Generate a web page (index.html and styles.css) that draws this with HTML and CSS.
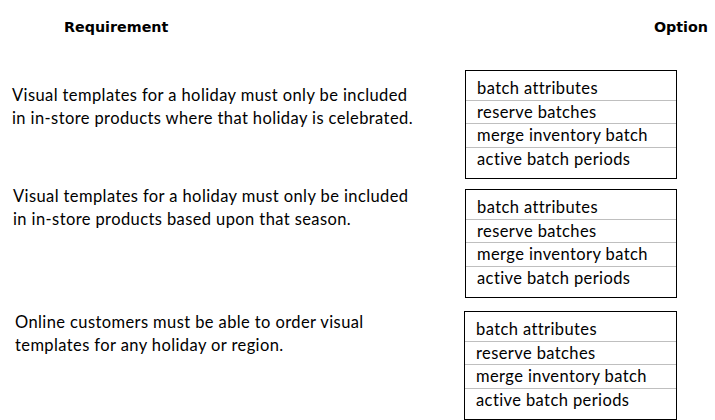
FILE: index.html
```html
<!DOCTYPE html>
<html lang="en">
<head>
  <meta charset="UTF-8" />
  <meta name="viewport" content="width=device-width, initial-scale=1.0" />
  <title>Requirement / Option</title>
  <link rel="stylesheet" href="styles.css">
</head>
<body>

  <main class="sheet">
    <header class="heads">
      <h2 class="head head-req">Requirement</h2>
      <h2 class="head head-opt">Option</h2>
    </header>

    <section class="pair pair-1">
      <p class="req">Visual templates for a holiday must only be included<br>in in-store products where that holiday is celebrated.</p>
      <ul class="opts">
        <li>batch attributes</li>
        <li>reserve batches</li>
        <li>merge inventory batch</li>
        <li>active batch periods</li>
      </ul>
    </section>

    <section class="pair pair-2">
      <p class="req">Visual templates for a holiday must only be included<br>in in-store products based upon that season.</p>
      <ul class="opts">
        <li>batch attributes</li>
        <li>reserve batches</li>
        <li>merge inventory batch</li>
        <li>active batch periods</li>
      </ul>
    </section>

    <section class="pair pair-3">
      <p class="req">Online customers must be able to order visual<br>templates for any holiday or region.</p>
      <ul class="opts">
        <li>batch attributes</li>
        <li>reserve batches</li>
        <li>merge inventory batch</li>
        <li>active batch periods</li>
      </ul>
    </section>
  </main>

</body>
</html>
```

FILE: styles.css
```css
/* Base */
* {
  box-sizing: border-box;
  margin: 0;
  padding: 0;
}

body {
  font-family: Lato, "Open Sans", sans-serif;
  background: #fff;
  color: #000;
}

.sheet {
  width: 715px;
}

/* Column headings */
.heads {
  display: flex;
  justify-content: space-between;
  height: 70px;
  padding: 17px 7px 0 64px;
}

.head {
  font-family: "DejaVu Sans", Verdana, sans-serif;
  font-size: 14.3px;
  font-weight: bold;
  line-height: 20px;
}

/* Requirement + option box rows */
.pair {
  display: grid;
  grid-template-columns: 465px 212px;
}

.pair-2 {
  margin-top: 10px;
}

.pair-3 {
  margin-top: 13px;
}

.req {
  font-size: 16.5px;
  letter-spacing: 0.4px;
  line-height: 23px;
}

.pair-1 .req {
  padding: 14px 0 0 12px;
}

.pair-2 .req {
  margin-top: -4px;
  padding-left: 13px;
}

.pair-3 .req {
  padding-left: 15px;
}

.opts {
  list-style: none;
  border: 1px solid #000;
  padding-top: 6px;
  height: 109px;
  font-size: 16.5px;
  letter-spacing: 0.4px;
}

.opts li {
  line-height: 22.5px;
  padding-left: 11px;
  border-bottom: 1px solid #bfbfbf;
}

.opts li:last-child {
  border-bottom: none;
}

.pair-3 .opts {
  margin-left: -1px;
}
```
